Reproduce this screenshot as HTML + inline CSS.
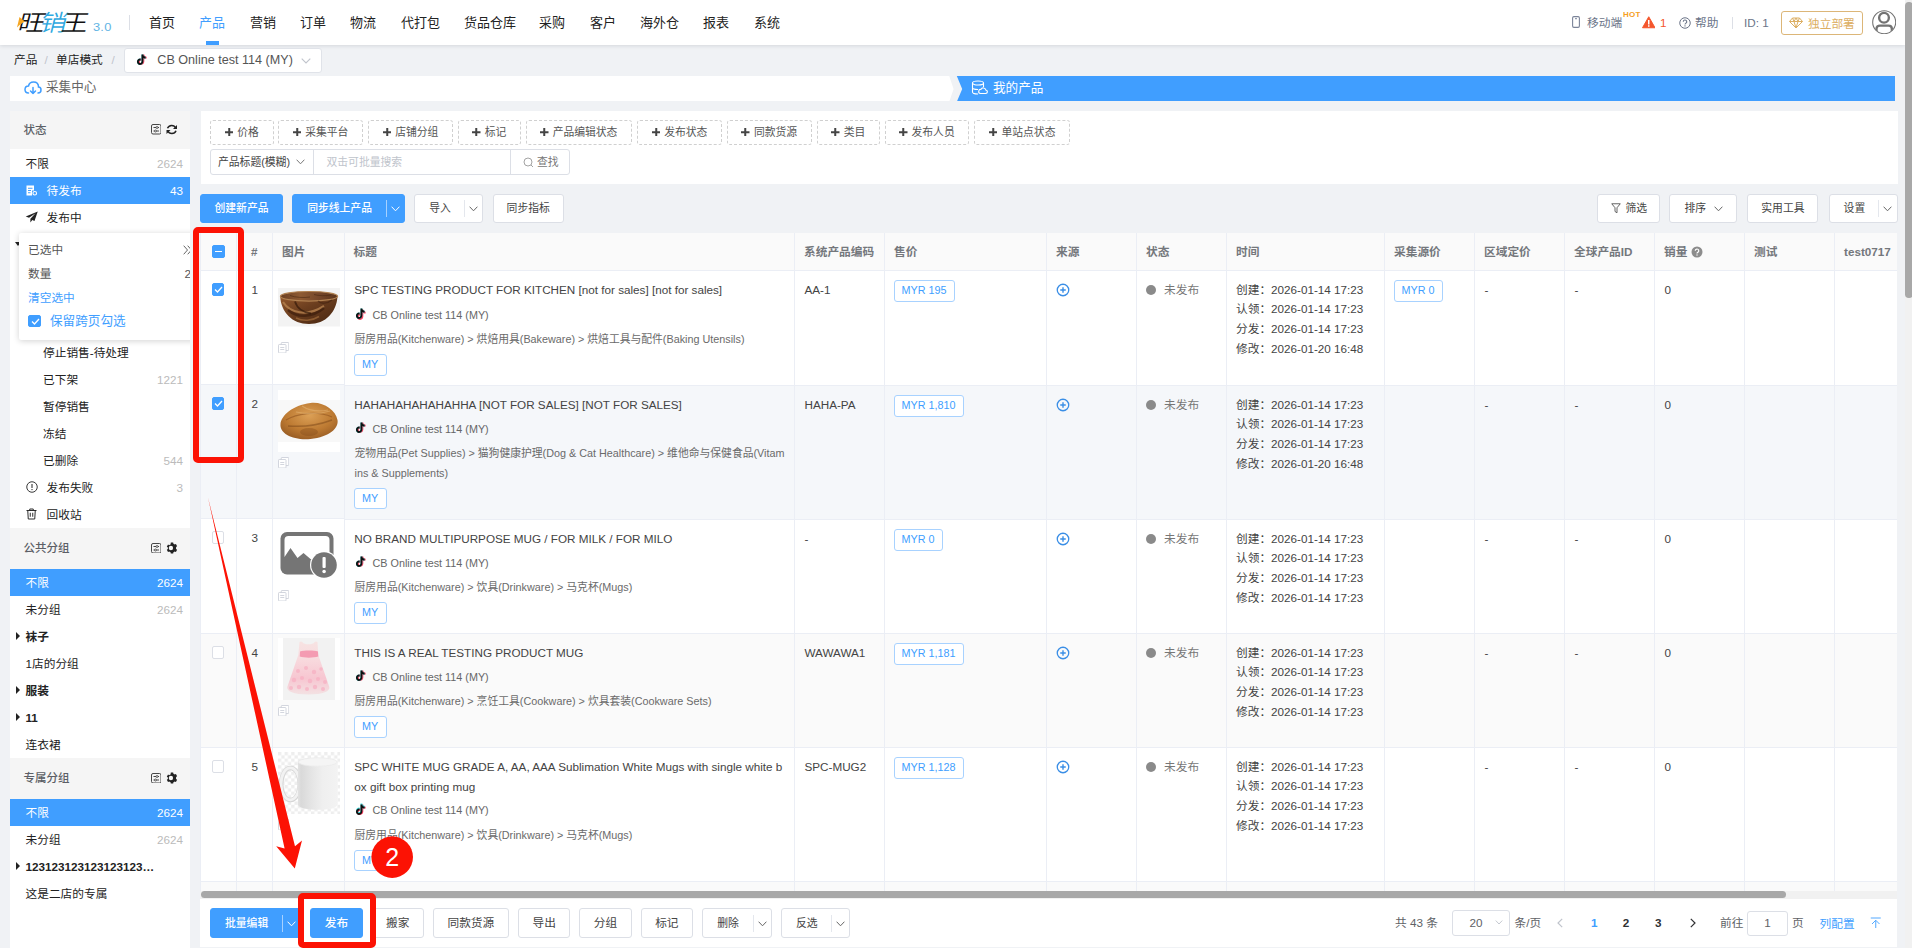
<!DOCTYPE html><html lang="zh-CN"><head><meta charset="utf-8"><title>旺销王 - 产品</title><style>
*{box-sizing:border-box;margin:0;padding:0}
html,body{width:1912px;height:948px;overflow:hidden}
body{background:#f0f2f5;font-family:"Liberation Sans","Noto Sans CJK SC",sans-serif;font-size:10.8px;color:#333;position:relative;line-height:1}
.a{position:absolute}
.t{position:absolute;white-space:nowrap;line-height:1}
#hdr{left:0;top:0;width:1905px;height:45px;background:#fff;box-shadow:0 1px 4px rgba(0,21,41,.12)}
.nav{font-size:13px;color:#222;top:15.5px}
.btn{position:absolute;height:28.5px;border:1px solid #dcdfe6;border-radius:3px;background:#fff;color:#444;font-size:10.8px;text-align:center;line-height:26px;white-space:nowrap}
.btn.p{background:#409eff;border-color:#409eff;color:#fff;font-weight:500}
.tag{position:absolute;top:120px;height:24.5px;border:1px dashed #d0d0d0;border-radius:3px;background:#fff;color:#555;font-size:10.8px;line-height:22px;text-align:center;white-space:nowrap}
.tag svg{display:inline-block;vertical-align:-.2px;margin-right:4px}
.sb{left:10px;width:180px;background:#fff}
.sh{position:absolute;left:10px;width:180px;height:38.5px;background:#f5f5f5;color:#5c5f66;font-weight:500;font-size:11.5px}
.si{position:absolute;left:10px;width:180px;height:27px;font-size:11.7px;color:#222;line-height:27px}
.si.sel{background:#409eff;color:#fff}
.si .n{position:absolute;right:7px;top:0;color:#bbb;font-size:11.7px}
.si.sel .n{color:#fff}
.si .l{position:absolute;top:0}
.th{position:absolute;top:0;height:38px;line-height:38px;font-weight:bold;color:#74777c;font-size:11.7px;white-space:nowrap}
.vl{position:absolute;top:232.5px;width:1px;height:658px;background:#ebeef5}
.row{position:absolute;left:200.5px;width:1696px;border-bottom:1px solid #ebeef5}
.ttl{position:absolute;left:153.3px;width:432px;font-size:11.7px;line-height:19.8px;color:#444;word-break:break-all}
.shop{position:absolute;left:171.5px;font-size:10.8px;color:#666;white-space:nowrap;line-height:12px}
.cat{position:absolute;left:153.5px;width:431px;font-size:10.8px;color:#6a6a6a;line-height:19.8px;word-break:break-all}
.my{position:absolute;left:152.5px;width:33px;height:21.5px;border:1px solid #a8d2ff;border-radius:3px;color:#409eff;font-size:10.8px;line-height:19px;text-align:center;background:#fff}
.price{position:absolute;height:21.5px;border:1px solid #a8d2ff;border-radius:3px;color:#409eff;font-size:10.8px;line-height:19px;text-align:center;background:#fff;white-space:nowrap;padding:0 7px}
.c{position:absolute;font-size:11.7px;color:#444;white-space:nowrap;line-height:14px}
.tm{position:absolute;left:1035px;font-size:11.7px;color:#444;white-space:nowrap;line-height:19.7px}
.cb{position:absolute;width:12.5px;height:12.5px;border:1px solid #dcdfe6;border-radius:2px;background:#fff}
.cb.on{background:#409eff;border-color:#409eff}
.red{position:absolute;border:6.5px solid #fc1204;border-radius:5px}
</style></head><body><div id="hdr" class="a"></div><div class="t" style="left:15.5px;top:12px;font-size:23px;font-weight:350;letter-spacing:-4.2px;color:#111;transform:skewX(-14deg) scaleX(1.15);transform-origin:left bottom">旺<span style="color:#2ea8e0">销</span>王</div>
<svg class="a" style="left:17px;top:17px" width="8" height="10.5" viewBox="0 0 8 10.5"><path d="M2.500 0 L7.800 4.500 L2.500 8 L0 10.500 Z" fill="#f5a623"/></svg>
<div class="t" style="left:92.5px;top:21.8px;font-size:10.5px;color:#62b4e4;letter-spacing:.2px;transform:scaleX(1.22);transform-origin:left">3.0</div>
<div class="a" style="left:129px;top:15px;width:1px;height:15px;background:#dcdfe6"></div><div class="t nav" style="left:149px">首页</div><div class="t nav" style="left:199px;color:#409eff">产品</div><div class="t nav" style="left:250px">营销</div><div class="t nav" style="left:300px">订单</div><div class="t nav" style="left:350px">物流</div><div class="t nav" style="left:401px">代打包</div><div class="t nav" style="left:464px">货品仓库</div><div class="t nav" style="left:539px">采购</div><div class="t nav" style="left:590px">客户</div><div class="t nav" style="left:640px">海外仓</div><div class="t nav" style="left:703px">报表</div><div class="t nav" style="left:754px">系统</div><div class="a" style="left:206px;top:41px;width:13px;height:4px;background:#409eff"></div><svg class="a" style="left:1572px;top:16px" width="8" height="12" viewBox="0 0 8 12"><rect x=".6" y=".6" width="6.8" height="10.8" rx="1.3" fill="none" stroke="#7b8499" stroke-width="1.1"/><rect x="3" y="2.2" width="2" height="1" fill="#7b8499"/></svg>
<div class="t" style="left:1587px;top:16.5px;font-size:11.7px;color:#6b7488">移动端</div>
<div class="t" style="left:1622.500px;top:10.800px;font-size:7.400px;font-weight:bold;color:#f5a023;letter-spacing:.3px;transform:scaleX(1.08);transform-origin:left">HOT</div>
<svg class="a" style="left:1641.5px;top:16px" width="13.5" height="12.5" viewBox="0 0 27 25"><path d="M13.5 1.5 L26 23.5 L1 23.5 Z" fill="#f4562c" stroke="#f4562c" stroke-width="2" stroke-linejoin="round"/><rect x="12" y="8" width="3" height="9" fill="#fff"/><rect x="12" y="18.5" width="3" height="3" fill="#fff"/></svg>
<div class="t" style="left:1660px;top:16.5px;font-size:11.7px;color:#f4562c">1</div>
<svg class="a" style="left:1678.5px;top:16.5px" width="12" height="12" viewBox="0 0 24 24"><circle cx="12" cy="12" r="10.5" fill="none" stroke="#6b7488" stroke-width="2"/><path d="M8.5 9.5a3.5 3.5 0 1 1 5 3.2c-1 .6-1.5 1.1-1.5 2.3" fill="none" stroke="#6b7488" stroke-width="2.2"/><rect x="10.9" y="16.6" width="2.2" height="2.4" fill="#6b7488"/></svg>
<div class="t" style="left:1695px;top:16.5px;font-size:11.7px;color:#6b7488">帮助</div>
<div class="a" style="left:1732px;top:17px;width:1px;height:12px;background:#dcdfe6"></div>
<div class="t" style="left:1744px;top:17px;font-size:11.7px;color:#6b7488">ID: 1</div>
<div class="a" style="left:1781px;top:11px;width:82px;height:24px;border:1px solid #dcb678;border-radius:3px;background:#fff"></div>
<svg class="a" style="left:1789px;top:17px" width="14" height="12" viewBox="0 0 28 24"><path d="M7 2h14l6 7-13 13L1 9z M1 9h26 M10 9l4 13 4-13 M7 2l3 7 4-7 4 7 3-7" fill="none" stroke="#dcae62" stroke-width="2" stroke-linejoin="round"/></svg>
<div class="t" style="left:1808px;top:17.5px;font-size:11.7px;color:#dcae62">独立部署</div>
<svg class="a" style="left:1871.800px;top:9.800px" width="24.400" height="24.400" viewBox="0 0 50 50"><defs><clipPath id="avc"><circle cx="25" cy="25" r="23"/></clipPath></defs><circle cx="25" cy="25" r="23.600" fill="#fff" stroke="#737373" stroke-width="2.200"/><g clip-path="url(#avc)" fill="none" stroke="#737373" stroke-width="4.800"><circle cx="24.600" cy="15.800" r="10"/><path d="M9.200 46v-7.500c0-4 3-6.500 7-6.500h17.500c4 0 7 2.500 7 6.500V46"/></g></svg><div class="t" style="left:14px;top:54px;font-size:11.7px;color:#222">产品</div>
<div class="t" style="left:44.5px;top:54px;font-size:11.7px;color:#c0c4cc">/</div>
<div class="t" style="left:56px;top:54px;font-size:11.7px;color:#222">单店模式</div>
<div class="t" style="left:111.5px;top:54px;font-size:11.7px;color:#c0c4cc">/</div>
<div class="a" style="left:124px;top:47.600px;width:198px;height:25px;border:1px solid #e0e3e9;border-radius:3px;background:#fff"></div>
<svg class="a" style="left:136.5px;top:54.4px" width="10.500" height="11.500" viewBox="0 0 21 23"><path d="M11 1h3.600c.3 2.600 1.800 4.300 4.600 4.600v3.600c-1.700 0-3.200-.5-4.600-1.400v7.400c0 4-2.900 6.600-6.400 6.600-3.600 0-6.300-2.800-6.300-6.300 0-3.900 3.300-6.800 7.300-6.200v3.700c-1.900-.5-3.600.7-3.600 2.500 0 1.500 1.200 2.600 2.600 2.600 1.600 0 2.800-1.100 2.800-3z" fill="#ff3b5c"/></svg><svg class="a" style="left:135.6px;top:53.7px" width="10.500" height="11.500" viewBox="0 0 21 23"><path d="M11 1h3.600c.3 2.600 1.800 4.300 4.600 4.600v3.600c-1.700 0-3.200-.5-4.600-1.400v7.400c0 4-2.900 6.600-6.400 6.600-3.600 0-6.300-2.800-6.300-6.300 0-3.900 3.300-6.800 7.300-6.200v3.700c-1.900-.5-3.600.7-3.600 2.500 0 1.500 1.200 2.600 2.600 2.600 1.600 0 2.800-1.100 2.800-3z" fill="#41e0e0"/></svg><svg class="a" style="left:136px;top:54px" width="10.500" height="11.500" viewBox="0 0 21 23"><path d="M11 1h3.600c.3 2.600 1.800 4.300 4.600 4.600v3.600c-1.700 0-3.200-.5-4.600-1.400v7.400c0 4-2.900 6.600-6.400 6.600-3.600 0-6.300-2.800-6.300-6.300 0-3.900 3.300-6.800 7.300-6.200v3.700c-1.900-.5-3.600.7-3.600 2.500 0 1.500 1.200 2.600 2.600 2.600 1.600 0 2.800-1.100 2.800-3z" fill="#111"/></svg>
<div class="t" style="left:157.3px;top:53.5px;font-size:12.6px;color:#555">CB Online test 114 (MY)</div>
<svg class="a" style="left:300.5px;top:57.5px" width="10" height="6" viewBox="0 0 10 6"><path d="M.7.7 5 5 9.3.7" fill="none" stroke="#c0c4cc" stroke-width="1.1"/></svg><div class="a" style="left:10px;top:75.600px;width:1885px;height:25.800px;background:#fff"></div>
<svg class="a" style="left:944px;top:75.600px" width="20" height="25.800" viewBox="0 0 20 25" preserveAspectRatio="none"><rect width="20" height="25" fill="#f0f2f5"/><path d="M0 0H5.200L9.600 12.500 5.200 25H0Z" fill="#fff"/><path d="M12.800 0H20V25H12.800L18.200 12.500Z" fill="#409eff"/></svg>
<div class="a" style="left:963px;top:75.600px;width:932px;height:25.800px;background:#409eff"></div>
<svg class="a" style="left:24px;top:80.6px" width="18" height="15" viewBox="0 0 36 30"><path d="M9 24c-4 0-7-3-7-7s3-7 7-7c1-5 5-8 10-8 6 0 10 4 10 10 3 0 5 3 5 6 0 4-3 6-6 6" fill="none" stroke="#409eff" stroke-width="3" stroke-linecap="round"/><path d="M18 13v12m-5-5 5 5 5-5" fill="none" stroke="#409eff" stroke-width="3" stroke-linecap="round" stroke-linejoin="round"/></svg>
<div class="t" style="left:46px;top:81px;font-size:12.6px;color:#666">采集中心</div>
<svg class="a" style="left:971px;top:80px" width="17" height="16" viewBox="0 0 34 32"><ellipse cx="14" cy="6" rx="11" ry="4" fill="none" stroke="#fff" stroke-width="2.2"/><path d="M3 6v18c0 2.2 4.9 4 11 4 M25 6v8 M3 15c0 2.2 4.9 4 11 4" fill="none" stroke="#fff" stroke-width="2.2"/><path d="M19 27h10a3.5 3.5 0 0 0 .5-7 5 5 0 0 0-9.500-1.200A4 4 0 0 0 19 27z" fill="none" stroke="#fff" stroke-width="2.2"/></svg>
<div class="t" style="left:993px;top:81.5px;font-size:12.6px;color:#fff">我的产品</div><div class="a" style="left:200.500px;top:110.500px;width:1697px;height:73.500px;background:#fff"></div><div class="tag" style="left:210px;width:63.5px"><svg width="8.500" height="8.500" viewBox="0 0 17 17"><path d="M6.500 0h4v6.500H17v4h-6.500V17h-4v-6.500H0v-4h6.500z" fill="#444"/></svg>价格</div><div class="tag" style="left:278.4px;width:84.2px"><svg width="8.500" height="8.500" viewBox="0 0 17 17"><path d="M6.500 0h4v6.500H17v4h-6.500V17h-4v-6.500H0v-4h6.500z" fill="#444"/></svg>采集平台</div><div class="tag" style="left:368.4px;width:84.2px"><svg width="8.500" height="8.500" viewBox="0 0 17 17"><path d="M6.500 0h4v6.500H17v4h-6.500V17h-4v-6.500H0v-4h6.500z" fill="#444"/></svg>店铺分组</div><div class="tag" style="left:457.5px;width:63.5px"><svg width="8.500" height="8.500" viewBox="0 0 17 17"><path d="M6.500 0h4v6.500H17v4h-6.500V17h-4v-6.500H0v-4h6.500z" fill="#444"/></svg>标记</div><div class="tag" style="left:525.6px;width:106.4px"><svg width="8.500" height="8.500" viewBox="0 0 17 17"><path d="M6.500 0h4v6.500H17v4h-6.500V17h-4v-6.500H0v-4h6.500z" fill="#444"/></svg>产品编辑状态</div><div class="tag" style="left:637px;width:85px"><svg width="8.500" height="8.500" viewBox="0 0 17 17"><path d="M6.500 0h4v6.500H17v4h-6.500V17h-4v-6.500H0v-4h6.500z" fill="#444"/></svg>发布状态</div><div class="tag" style="left:726.5px;width:85.5px"><svg width="8.500" height="8.500" viewBox="0 0 17 17"><path d="M6.500 0h4v6.500H17v4h-6.500V17h-4v-6.500H0v-4h6.500z" fill="#444"/></svg>同款货源</div><div class="tag" style="left:816.5px;width:63.4px"><svg width="8.500" height="8.500" viewBox="0 0 17 17"><path d="M6.500 0h4v6.500H17v4h-6.500V17h-4v-6.500H0v-4h6.500z" fill="#444"/></svg>类目</div><div class="tag" style="left:884.6px;width:84.5px"><svg width="8.500" height="8.500" viewBox="0 0 17 17"><path d="M6.500 0h4v6.500H17v4h-6.500V17h-4v-6.500H0v-4h6.500z" fill="#444"/></svg>发布人员</div><div class="tag" style="left:974.3px;width:95.8px"><svg width="8.500" height="8.500" viewBox="0 0 17 17"><path d="M6.500 0h4v6.500H17v4h-6.500V17h-4v-6.500H0v-4h6.500z" fill="#444"/></svg>单站点状态</div><div class="a" style="left:210px;top:149px;width:360px;height:26px;border:1px solid #dcdfe6;border-radius:3px;background:#fff"></div>
<div class="a" style="left:313px;top:150px;width:1px;height:24px;background:#dcdfe6"></div>
<div class="a" style="left:510px;top:150px;width:1px;height:24px;background:#dcdfe6"></div>
<div class="t" style="left:218px;top:156.5px;font-size:10.8px;color:#444">产品标题(模糊)</div>
<svg class="a" style="left:295.5px;top:159px" width="9" height="6" viewBox="0 0 9 6"><path d="M.6.7 4.500 4.800 8.400.7" fill="none" stroke="#777" stroke-width="1"/></svg>
<div class="t" style="left:326.5px;top:156.500px;font-size:10.8px;color:#c0c4cc">双击可批量搜索</div>
<svg class="a" style="left:523px;top:156.500px" width="11" height="11" viewBox="0 0 22 22"><circle cx="10" cy="10" r="8" fill="none" stroke="#999" stroke-width="1.800"/><path d="M16 16l4 4" stroke="#999" stroke-width="1.800"/></svg>
<div class="t" style="left:537px;top:156.500px;font-size:10.8px;color:#777">查找</div><div class="btn p" style="left:200px;top:194px;width:83px;height:29px;line-height:27px">创建新产品</div><div class="btn p" style="left:292.2px;top:194px;width:113px;height:29px;line-height:27px"><span style="position:absolute;left:14px">同步线上产品</span></div><div class="a" style="left:385.5px;top:200px;width:1px;height:17px;background:#a6d1ff"></div><svg class="a" style="left:390.5px;top:206px" width="9" height="6" viewBox="0 0 9 6"><path d="M.6.7 4.500 4.800 8.400.7" fill="none" stroke="#fff" stroke-width="1"/></svg><div class="btn" style="left:414.3px;top:194px;width:68.5px;height:29px;line-height:27px"><span style="position:absolute;left:14px">导入</span></div><div class="a" style="left:463.5px;top:200px;width:1px;height:17px;background:#e4e7ed"></div><svg class="a" style="left:468.5px;top:206px" width="9" height="6" viewBox="0 0 9 6"><path d="M.6.7 4.500 4.800 8.400.7" fill="none" stroke="#666" stroke-width="1"/></svg><div class="btn" style="left:492.7px;top:194px;width:71px;height:29px;line-height:27px">同步指标</div><div class="btn" style="left:1596.5px;top:194px;width:63px;height:29px;line-height:27px"><span style="position:absolute;left:28px">筛选</span></div><svg class="a" style="left:1611px;top:203px" width="10" height="11" viewBox="0 0 20 22"><path d="M1.500 1.500h17l-6.500 8v10l-4-2.500v-7.500z" fill="none" stroke="#555" stroke-width="1.800" stroke-linejoin="round"/></svg><div class="btn" style="left:1669.4px;top:194px;width:68px;height:29px;line-height:27px"><span style="position:absolute;left:14px">排序</span></div><svg class="a" style="left:1713.5px;top:206px" width="9" height="6" viewBox="0 0 9 6"><path d="M.6.7 4.500 4.800 8.400.7" fill="none" stroke="#666" stroke-width="1"/></svg><div class="btn" style="left:1747.4px;top:194px;width:71px;height:29px;line-height:27px">实用工具</div><div class="btn" style="left:1828.6px;top:194px;width:69px;height:29px;line-height:27px"><span style="position:absolute;left:14px">设置</span></div><div class="a" style="left:1878px;top:200px;width:1px;height:17px;background:#e4e7ed"></div><svg class="a" style="left:1883px;top:206px" width="9" height="6" viewBox="0 0 9 6"><path d="M.6.7 4.500 4.800 8.400.7" fill="none" stroke="#666" stroke-width="1"/></svg><div class="a" style="left:200.5px;top:232.5px;width:1696px;height:658px;background:#fff;overflow:hidden"></div><div class="a" style="left:200.5px;top:232.500px;width:1696px;height:38px;background:#fafafa;border-bottom:1px solid #ebeef5"></div><div class="row" style="top:271px;height:115px;background:#fff"><div class="a" style="left:.5px;top:-.5px"><div class="ttl" style="top:9.250px">SPC TESTING PRODUCT FOR KITCHEN [not for sales] [not for sales]</div><svg class="a" style="left:154.8px;top:38.099999999999994px" width="10.500" height="11.500" viewBox="0 0 21 23"><path d="M11 1h3.600c.3 2.600 1.800 4.300 4.600 4.600v3.600c-1.700 0-3.200-.5-4.600-1.400v7.400c0 4-2.900 6.600-6.400 6.600-3.600 0-6.300-2.800-6.300-6.300 0-3.900 3.300-6.800 7.300-6.200v3.700c-1.900-.5-3.600.7-3.600 2.500 0 1.500 1.200 2.600 2.600 2.600 1.600 0 2.800-1.100 2.800-3z" fill="#ff3b5c"/></svg><svg class="a" style="left:153.9px;top:37.4px" width="10.500" height="11.500" viewBox="0 0 21 23"><path d="M11 1h3.600c.3 2.600 1.800 4.300 4.600 4.600v3.600c-1.700 0-3.200-.5-4.600-1.400v7.400c0 4-2.900 6.600-6.400 6.600-3.600 0-6.300-2.800-6.300-6.300 0-3.900 3.300-6.800 7.300-6.200v3.700c-1.900-.5-3.600.7-3.600 2.500 0 1.500 1.200 2.600 2.600 2.600 1.600 0 2.800-1.100 2.800-3z" fill="#41e0e0"/></svg><svg class="a" style="left:154.3px;top:37.699999999999996px" width="10.500" height="11.500" viewBox="0 0 21 23"><path d="M11 1h3.600c.3 2.600 1.800 4.300 4.600 4.600v3.600c-1.700 0-3.200-.5-4.600-1.400v7.400c0 4-2.900 6.600-6.400 6.600-3.600 0-6.300-2.800-6.300-6.300 0-3.900 3.300-6.800 7.300-6.200v3.700c-1.900-.5-3.600.7-3.600 2.500 0 1.500 1.200 2.600 2.600 2.600 1.600 0 2.800-1.100 2.800-3z" fill="#111"/></svg><div class="shop" style="top:38.4px">CB Online test 114 (MY)</div><div class="cat" style="top:59.2px">厨房用品(Kitchenware) &gt; 烘焙用具(Bakeware) &gt; 烘焙工具与配件(Baking Utensils)</div><div class="my" style="top:83.8px">MY</div><div class="c" style="left:603.500px;top:12.500px">AA-1</div><div class="price" style="left:692.500px;top:9.500px">MYR 195</div><svg class="a" style="left:855px;top:12px" width="14" height="14" viewBox="0 0 28 28"><circle cx="14" cy="14" r="11.500" fill="none" stroke="#3a8ee6" stroke-width="2.600"/><path d="M14 8.500v11M8.500 14h11" stroke="#3a8ee6" stroke-width="2.800"/></svg><div class="a" style="left:945px;top:14px;width:10px;height:10px;border-radius:5px;background:#8a8a8a"></div><div class="c" style="left:963px;top:12.500px;color:#777">未发布</div><div class="tm" style="top:9.200px">创建：2026-01-14 17:23<br>认领：2026-01-14 17:23<br>分发：2026-01-14 17:23<br>修改：2026-01-20 16:48</div><div class="price" style="left:1192.500px;top:9.500px">MYR 0</div><div class="c" style="left:1283.500px;top:12.500px">-</div><div class="c" style="left:1373.500px;top:12.500px">-</div><div class="c" style="left:1463.500px;top:12.500px">0</div></div></div><div class="row" style="top:271px;height:114px;width:144px;background:#fff"><div class="a" style="left:-.5px;top:-.5px"><div class="cb on" style="left:11.800px;top:12.500px"><svg class="a" style="left:1.500px;top:2px" width="9" height="7" viewBox="0 0 18 14"><path d="M2 7l5 5L16 2" fill="none" stroke="#fff" stroke-width="2.600"/></svg></div><div class="c" style="left:51.500px;top:12px">1</div><div class="a" style="left:0;top:0px"><svg class="a" style="left:77.5px;top:17.5px" width="62" height="38.500" viewBox="0 0 62 38.500"><defs><linearGradient id="bw" x1="0" y1="0" x2="1" y2="1"><stop offset="0" stop-color="#94592e"/><stop offset=".45" stop-color="#6a3d1e"/><stop offset="1" stop-color="#472611"/></linearGradient><linearGradient id="bi" x1="0" y1="0" x2="1" y2="0"><stop offset="0" stop-color="#6b3f22"/><stop offset=".35" stop-color="#8d5a33"/><stop offset=".7" stop-color="#74462a"/><stop offset="1" stop-color="#5a331b"/></linearGradient></defs><rect width="62" height="38.500" fill="#f3f3f3"/><path d="M2.200 8.500C3 24 14 36 31 36s27.500-12 28.500-27.500C52 13.500 10 13.500 2.200 8.500z" fill="url(#bw)"/><ellipse cx="31" cy="8.300" rx="28.600" ry="4.800" fill="url(#bi)" stroke="#b08050" stroke-width="1.200"/><path d="M5 14c7 11 24 15 41 4" stroke="#b98552" stroke-width="2.200" fill="none" opacity=".75"/><path d="M10 22c9 8 24 8 36-2" stroke="#35190a" stroke-width="2.400" fill="none" opacity=".6"/><path d="M17 13.500c2 7 9 11 16 12" stroke="#2e1508" stroke-width="1.800" fill="none" opacity=".65"/><path d="M18 30c7 3.500 16 3 23-1.500" stroke="#a8713f" stroke-width="1.600" fill="none" opacity=".65"/><path d="M40 13c3 3 9 3 14-1" stroke="#3a1c0c" stroke-width="1.500" fill="none" opacity=".5"/><path d="M12 7.500c5 2 14 2.500 20 1.500M36 6.500c5 1.500 12 1.500 17 .5" stroke="#4a2812" stroke-width="1" fill="none" opacity=".6"/></svg></div><svg class="a" style="left:77.5px;top:71.4px" width="11.500" height="11.500" viewBox="0 0 23 23"><rect x="6.500" y="1" width="15" height="16" rx="1.500" fill="#fff" stroke="#c8ccd6" stroke-width="1.600"/><rect x="1" y="5" width="15" height="17" rx="1.500" fill="#fff" stroke="#c8ccd6" stroke-width="1.600"/><path d="M4.500 11h8M4.500 15h8" stroke="#c8ccd6" stroke-width="1.600"/></svg></div></div><div class="row" style="top:386px;height:134px;background:#f5f7fa"><div class="a" style="left:.5px;top:-.5px"><div class="ttl" style="top:9.250px">HAHAHAHAHAHAHHA [NOT FOR SALES] [NOT FOR SALES]</div><svg class="a" style="left:154.8px;top:36.8px" width="10.500" height="11.500" viewBox="0 0 21 23"><path d="M11 1h3.600c.3 2.600 1.800 4.300 4.600 4.600v3.600c-1.700 0-3.200-.5-4.600-1.400v7.400c0 4-2.900 6.600-6.400 6.600-3.600 0-6.300-2.800-6.300-6.300 0-3.900 3.300-6.800 7.300-6.200v3.700c-1.900-.5-3.600.7-3.600 2.500 0 1.500 1.200 2.600 2.600 2.600 1.600 0 2.800-1.100 2.800-3z" fill="#ff3b5c"/></svg><svg class="a" style="left:153.9px;top:36.1px" width="10.500" height="11.500" viewBox="0 0 21 23"><path d="M11 1h3.600c.3 2.600 1.800 4.300 4.600 4.600v3.600c-1.700 0-3.200-.5-4.600-1.400v7.400c0 4-2.900 6.600-6.400 6.600-3.600 0-6.300-2.800-6.300-6.300 0-3.900 3.300-6.800 7.300-6.200v3.700c-1.900-.5-3.600.7-3.600 2.500 0 1.500 1.200 2.600 2.600 2.600 1.600 0 2.800-1.100 2.800-3z" fill="#41e0e0"/></svg><svg class="a" style="left:154.3px;top:36.4px" width="10.500" height="11.500" viewBox="0 0 21 23"><path d="M11 1h3.600c.3 2.600 1.800 4.300 4.600 4.600v3.600c-1.700 0-3.200-.5-4.600-1.400v7.400c0 4-2.900 6.600-6.400 6.600-3.600 0-6.300-2.800-6.300-6.300 0-3.900 3.300-6.800 7.300-6.200v3.700c-1.900-.5-3.600.7-3.600 2.500 0 1.500 1.200 2.600 2.600 2.600 1.600 0 2.800-1.100 2.800-3z" fill="#111"/></svg><div class="shop" style="top:37.1px">CB Online test 114 (MY)</div><div class="cat" style="top:58.6px">宠物用品(Pet Supplies) &gt; 猫狗健康护理(Dog &amp; Cat Healthcare) &gt; 维他命与保健食品(Vitamins &amp; Supplements)</div><div class="my" style="top:102.3px">MY</div><div class="c" style="left:603.500px;top:12.500px">HAHA-PA</div><div class="price" style="left:692.500px;top:9.500px">MYR 1,810</div><svg class="a" style="left:855px;top:12px" width="14" height="14" viewBox="0 0 28 28"><circle cx="14" cy="14" r="11.500" fill="none" stroke="#3a8ee6" stroke-width="2.600"/><path d="M14 8.500v11M8.500 14h11" stroke="#3a8ee6" stroke-width="2.800"/></svg><div class="a" style="left:945px;top:14px;width:10px;height:10px;border-radius:5px;background:#8a8a8a"></div><div class="c" style="left:963px;top:12.500px;color:#777">未发布</div><div class="tm" style="top:9.200px">创建：2026-01-14 17:23<br>认领：2026-01-14 17:23<br>分发：2026-01-14 17:23<br>修改：2026-01-20 16:48</div><div class="c" style="left:1283.500px;top:12.500px">-</div><div class="c" style="left:1373.500px;top:12.500px">-</div><div class="c" style="left:1463.500px;top:12.500px">0</div></div></div><div class="row" style="top:385px;height:134px;width:144px;background:#f5f7fa"><div class="a" style="left:-.5px;top:-.5px"><div class="cb on" style="left:11.800px;top:12.500px"><svg class="a" style="left:1.500px;top:2px" width="9" height="7" viewBox="0 0 18 14"><path d="M2 7l5 5L16 2" fill="none" stroke="#fff" stroke-width="2.600"/></svg></div><div class="c" style="left:51.500px;top:12px">2</div><div class="a" style="left:0;top:0px"><svg class="a" style="left:77.5px;top:5px" width="62" height="62" viewBox="0 0 62 62"><defs><radialGradient id="pl" cx=".5" cy=".35" r=".75"><stop offset="0" stop-color="#dca056"/><stop offset=".55" stop-color="#bd7a32"/><stop offset="1" stop-color="#8e5420"/></radialGradient></defs><rect width="62" height="62" fill="#fff"/><rect y="10" width="62" height="42" fill="#f8f8f8"/><path d="M2.500 34c.5-8 12-19 30-21 13-1.500 25 7 27 17 1.500 8-8 17-27 19-17 1.500-31-5-30-15z" fill="url(#pl)"/><path d="M8 30c10-6 30-10 46-3" stroke="#8a4f1c" stroke-width="1.200" fill="none" opacity=".55"/><path d="M10 36c12 1 28 0 44-6" stroke="#7a4518" stroke-width="1.500" fill="none" opacity=".5"/><path d="M24 16c6 4 16 6 26 4M18 22c10 2 24 2 34-1" stroke="#e2b070" stroke-width="1.200" fill="none" opacity=".6"/><ellipse cx="31" cy="42" rx="9" ry="4" fill="#7a4518" opacity=".35"/></svg></div><svg class="a" style="left:77.5px;top:72.4px" width="11.500" height="11.500" viewBox="0 0 23 23"><rect x="6.500" y="1" width="15" height="16" rx="1.500" fill="#fff" stroke="#c8ccd6" stroke-width="1.600"/><rect x="1" y="5" width="15" height="17" rx="1.500" fill="#fff" stroke="#c8ccd6" stroke-width="1.600"/><path d="M4.500 11h8M4.500 15h8" stroke="#c8ccd6" stroke-width="1.600"/></svg></div></div><div class="row" style="top:520px;height:114px;background:#fff"><div class="a" style="left:.5px;top:-.5px"><div class="ttl" style="top:9.250px">NO BRAND MULTIPURPOSE MUG / FOR MILK / FOR MILO</div><svg class="a" style="left:154.8px;top:36.8px" width="10.500" height="11.500" viewBox="0 0 21 23"><path d="M11 1h3.600c.3 2.600 1.800 4.300 4.600 4.600v3.600c-1.700 0-3.200-.5-4.600-1.400v7.400c0 4-2.900 6.600-6.400 6.600-3.600 0-6.300-2.800-6.300-6.300 0-3.900 3.300-6.800 7.300-6.200v3.700c-1.900-.5-3.600.7-3.600 2.500 0 1.500 1.200 2.600 2.600 2.600 1.600 0 2.800-1.100 2.800-3z" fill="#ff3b5c"/></svg><svg class="a" style="left:153.9px;top:36.1px" width="10.500" height="11.500" viewBox="0 0 21 23"><path d="M11 1h3.600c.3 2.600 1.800 4.300 4.600 4.600v3.600c-1.700 0-3.200-.5-4.600-1.400v7.400c0 4-2.900 6.600-6.400 6.600-3.600 0-6.300-2.800-6.300-6.300 0-3.900 3.300-6.800 7.300-6.200v3.700c-1.900-.5-3.600.7-3.600 2.500 0 1.500 1.200 2.600 2.600 2.600 1.600 0 2.800-1.100 2.800-3z" fill="#41e0e0"/></svg><svg class="a" style="left:154.3px;top:36.4px" width="10.500" height="11.500" viewBox="0 0 21 23"><path d="M11 1h3.600c.3 2.600 1.800 4.300 4.600 4.600v3.600c-1.700 0-3.200-.5-4.600-1.400v7.400c0 4-2.900 6.600-6.400 6.600-3.600 0-6.300-2.800-6.300-6.300 0-3.900 3.300-6.800 7.300-6.200v3.700c-1.900-.5-3.600.7-3.600 2.500 0 1.500 1.200 2.600 2.600 2.600 1.600 0 2.800-1.100 2.800-3z" fill="#111"/></svg><div class="shop" style="top:37.1px">CB Online test 114 (MY)</div><div class="cat" style="top:58.6px">厨房用品(Kitchenware) &gt; 饮具(Drinkware) &gt; 马克杯(Mugs)</div><div class="my" style="top:82.5px">MY</div><div class="c" style="left:603.500px;top:12.500px">-</div><div class="price" style="left:692.500px;top:9.500px">MYR 0</div><svg class="a" style="left:855px;top:12px" width="14" height="14" viewBox="0 0 28 28"><circle cx="14" cy="14" r="11.500" fill="none" stroke="#3a8ee6" stroke-width="2.600"/><path d="M14 8.500v11M8.500 14h11" stroke="#3a8ee6" stroke-width="2.800"/></svg><div class="a" style="left:945px;top:14px;width:10px;height:10px;border-radius:5px;background:#8a8a8a"></div><div class="c" style="left:963px;top:12.500px;color:#777">未发布</div><div class="tm" style="top:9.200px">创建：2026-01-14 17:23<br>认领：2026-01-14 17:23<br>分发：2026-01-14 17:23<br>修改：2026-01-14 17:23</div><div class="c" style="left:1283.500px;top:12.500px">-</div><div class="c" style="left:1373.500px;top:12.500px">-</div><div class="c" style="left:1463.500px;top:12.500px">0</div></div></div><div class="row" style="top:519px;height:115px;width:144px;background:#fff"><div class="a" style="left:-.5px;top:-.5px"><div class="cb" style="left:11.800px;top:12.500px"></div><div class="c" style="left:51.500px;top:12px">3</div><div class="a" style="left:0;top:0px"><svg class="a" style="left:79px;top:12px" width="60" height="54" viewBox="0 0 60 54"><rect x="1.500" y="1" width="53" height="42.500" rx="6.500" fill="#757575"/><path d="M5.500 9a4 4 0 0 1 4-4h37a4 4 0 0 1 4 4v19l-19 0-7-6-6 5-7-10-6 9z" fill="#fff"/><circle cx="45" cy="34" r="14" fill="#fff"/><circle cx="45" cy="34" r="12.800" fill="#757575"/><rect x="43.500" y="26" width="3.200" height="11" rx="1" fill="#fff"/><circle cx="45.100" cy="40.500" r="1.800" fill="#fff"/></svg></div><svg class="a" style="left:77.5px;top:71.4px" width="11.500" height="11.500" viewBox="0 0 23 23"><rect x="6.500" y="1" width="15" height="16" rx="1.500" fill="#fff" stroke="#c8ccd6" stroke-width="1.600"/><rect x="1" y="5" width="15" height="17" rx="1.500" fill="#fff" stroke="#c8ccd6" stroke-width="1.600"/><path d="M4.500 11h8M4.500 15h8" stroke="#c8ccd6" stroke-width="1.600"/></svg></div></div><div class="row" style="top:634px;height:114px;background:#fafafa"><div class="a" style="left:.5px;top:-.5px"><div class="ttl" style="top:9.250px">THIS IS A REAL TESTING PRODUCT MUG</div><svg class="a" style="left:154.8px;top:36.8px" width="10.500" height="11.500" viewBox="0 0 21 23"><path d="M11 1h3.600c.3 2.600 1.800 4.300 4.600 4.600v3.600c-1.700 0-3.200-.5-4.600-1.400v7.400c0 4-2.900 6.600-6.400 6.600-3.600 0-6.300-2.800-6.300-6.300 0-3.900 3.300-6.800 7.300-6.200v3.700c-1.900-.5-3.600.7-3.600 2.500 0 1.500 1.200 2.600 2.600 2.600 1.600 0 2.800-1.100 2.800-3z" fill="#ff3b5c"/></svg><svg class="a" style="left:153.9px;top:36.1px" width="10.500" height="11.500" viewBox="0 0 21 23"><path d="M11 1h3.600c.3 2.600 1.800 4.300 4.600 4.600v3.600c-1.700 0-3.200-.5-4.600-1.400v7.400c0 4-2.900 6.600-6.400 6.600-3.600 0-6.300-2.800-6.300-6.300 0-3.900 3.300-6.800 7.300-6.200v3.700c-1.900-.5-3.600.7-3.600 2.500 0 1.500 1.200 2.600 2.600 2.600 1.600 0 2.800-1.100 2.800-3z" fill="#41e0e0"/></svg><svg class="a" style="left:154.3px;top:36.4px" width="10.500" height="11.500" viewBox="0 0 21 23"><path d="M11 1h3.600c.3 2.600 1.800 4.300 4.600 4.600v3.600c-1.700 0-3.200-.5-4.600-1.400v7.400c0 4-2.900 6.600-6.400 6.600-3.600 0-6.300-2.800-6.300-6.300 0-3.900 3.300-6.800 7.300-6.200v3.700c-1.900-.5-3.600.7-3.600 2.500 0 1.500 1.200 2.600 2.600 2.600 1.600 0 2.800-1.100 2.800-3z" fill="#111"/></svg><div class="shop" style="top:37.1px">CB Online test 114 (MY)</div><div class="cat" style="top:58.6px">厨房用品(Kitchenware) &gt; 烹饪工具(Cookware) &gt; 炊具套装(Cookware Sets)</div><div class="my" style="top:82.5px">MY</div><div class="c" style="left:603.500px;top:12.500px">WAWAWA1</div><div class="price" style="left:692.500px;top:9.500px">MYR 1,181</div><svg class="a" style="left:855px;top:12px" width="14" height="14" viewBox="0 0 28 28"><circle cx="14" cy="14" r="11.500" fill="none" stroke="#3a8ee6" stroke-width="2.600"/><path d="M14 8.500v11M8.500 14h11" stroke="#3a8ee6" stroke-width="2.800"/></svg><div class="a" style="left:945px;top:14px;width:10px;height:10px;border-radius:5px;background:#8a8a8a"></div><div class="c" style="left:963px;top:12.500px;color:#777">未发布</div><div class="tm" style="top:9.200px">创建：2026-01-14 17:23<br>认领：2026-01-14 17:23<br>分发：2026-01-14 17:23<br>修改：2026-01-14 17:23</div><div class="c" style="left:1283.500px;top:12.500px">-</div><div class="c" style="left:1373.500px;top:12.500px">-</div><div class="c" style="left:1463.500px;top:12.500px">0</div></div></div><div class="row" style="top:634px;height:114px;width:144px;background:#fafafa"><div class="a" style="left:-.5px;top:-.5px"><div class="cb" style="left:11.800px;top:12.500px"></div><div class="c" style="left:51.500px;top:12px">4</div><div class="a" style="left:0;top:-0.9px"><svg class="a" style="left:77.5px;top:5px" width="62" height="62" viewBox="0 0 62 62"><defs><linearGradient id="dr" x1="0" y1="0" x2="0" y2="1"><stop offset="0" stop-color="#f7e3e2"/><stop offset=".3" stop-color="#f8dcdf"/><stop offset=".7" stop-color="#f7c6d1"/><stop offset="1" stop-color="#f3e2e3"/></linearGradient></defs><rect width="62" height="62" fill="#fff"/><rect x="5" width="52" height="62" fill="#f2f2f2"/><path d="M21.500 4c1.200-.8 2-.8 3 .2 1.500 2.800 10.500 2.800 12 0 1-1 1.800-1 3-.2l.8 13 11 32c1 4-6 7.500-21 7.500s-22-3.500-21-7.500l11-32z" fill="url(#dr)"/><path d="M22 13.500c4-1.200 14-1.200 18 0l.3 5c-5 1.500-14 1.500-18.600 0z" fill="#f49bb2"/><g fill="#f7afc2" opacity=".7"><circle cx="20" cy="33" r="2"/><circle cx="28" cy="30" r="2"/><circle cx="36" cy="34" r="2.200"/><circle cx="43" cy="31" r="1.800"/><circle cx="16" cy="42" r="2.200"/><circle cx="24" cy="40" r="2"/><circle cx="32" cy="43" r="2.300"/><circle cx="40" cy="41" r="2"/><circle cx="47" cy="44" r="2"/><circle cx="13" cy="50" r="2"/><circle cx="21" cy="49" r="2.200"/><circle cx="29" cy="51" r="2"/><circle cx="37" cy="49" r="2.200"/><circle cx="45" cy="51" r="2"/></g></svg></div><svg class="a" style="left:77.5px;top:71.4px" width="11.500" height="11.500" viewBox="0 0 23 23"><rect x="6.500" y="1" width="15" height="16" rx="1.500" fill="#fff" stroke="#c8ccd6" stroke-width="1.600"/><rect x="1" y="5" width="15" height="17" rx="1.500" fill="#fff" stroke="#c8ccd6" stroke-width="1.600"/><path d="M4.500 11h8M4.500 15h8" stroke="#c8ccd6" stroke-width="1.600"/></svg></div></div><div class="row" style="top:748px;height:134px;background:#fff"><div class="a" style="left:.5px;top:-.5px"><div class="ttl" style="top:9.250px">SPC WHITE MUG GRADE A, AA, AAA Sublimation White Mugs with single white box gift box printing mug</div><svg class="a" style="left:154.8px;top:56.599999999999994px" width="10.500" height="11.500" viewBox="0 0 21 23"><path d="M11 1h3.600c.3 2.600 1.800 4.300 4.600 4.600v3.600c-1.700 0-3.200-.5-4.600-1.400v7.400c0 4-2.900 6.600-6.400 6.600-3.600 0-6.300-2.800-6.300-6.300 0-3.900 3.300-6.800 7.300-6.200v3.700c-1.900-.5-3.600.7-3.600 2.500 0 1.500 1.200 2.600 2.600 2.600 1.600 0 2.800-1.100 2.800-3z" fill="#ff3b5c"/></svg><svg class="a" style="left:153.9px;top:55.9px" width="10.500" height="11.500" viewBox="0 0 21 23"><path d="M11 1h3.600c.3 2.600 1.800 4.300 4.600 4.600v3.600c-1.700 0-3.200-.5-4.600-1.400v7.400c0 4-2.900 6.600-6.400 6.600-3.600 0-6.300-2.800-6.300-6.300 0-3.900 3.300-6.800 7.300-6.200v3.700c-1.900-.5-3.600.7-3.600 2.500 0 1.500 1.200 2.600 2.600 2.600 1.600 0 2.800-1.100 2.800-3z" fill="#41e0e0"/></svg><svg class="a" style="left:154.3px;top:56.199999999999996px" width="10.500" height="11.500" viewBox="0 0 21 23"><path d="M11 1h3.600c.3 2.600 1.800 4.300 4.600 4.600v3.600c-1.700 0-3.200-.5-4.600-1.400v7.400c0 4-2.900 6.600-6.400 6.600-3.600 0-6.300-2.800-6.300-6.300 0-3.900 3.300-6.800 7.300-6.200v3.700c-1.900-.5-3.600.7-3.600 2.500 0 1.500 1.200 2.600 2.600 2.600 1.600 0 2.800-1.100 2.800-3z" fill="#111"/></svg><div class="shop" style="top:56.9px">CB Online test 114 (MY)</div><div class="cat" style="top:78.39999999999999px">厨房用品(Kitchenware) &gt; 饮具(Drinkware) &gt; 马克杯(Mugs)</div><div class="my" style="top:102.3px">MY</div><div class="c" style="left:603.500px;top:12.500px">SPC-MUG2</div><div class="price" style="left:692.500px;top:9.500px">MYR 1,128</div><svg class="a" style="left:855px;top:12px" width="14" height="14" viewBox="0 0 28 28"><circle cx="14" cy="14" r="11.500" fill="none" stroke="#3a8ee6" stroke-width="2.600"/><path d="M14 8.500v11M8.500 14h11" stroke="#3a8ee6" stroke-width="2.800"/></svg><div class="a" style="left:945px;top:14px;width:10px;height:10px;border-radius:5px;background:#8a8a8a"></div><div class="c" style="left:963px;top:12.500px;color:#777">未发布</div><div class="tm" style="top:9.200px">创建：2026-01-14 17:23<br>认领：2026-01-14 17:23<br>分发：2026-01-14 17:23<br>修改：2026-01-14 17:23</div><div class="c" style="left:1283.500px;top:12.500px">-</div><div class="c" style="left:1373.500px;top:12.500px">-</div><div class="c" style="left:1463.500px;top:12.500px">0</div></div></div><div class="row" style="top:748px;height:134px;width:144px;background:#fff"><div class="a" style="left:-.5px;top:-.5px"><div class="cb" style="left:11.800px;top:12.500px"></div><div class="c" style="left:51.500px;top:12px">5</div><div class="a" style="left:0;top:-0.9px"><svg class="a" style="left:77.5px;top:5px" width="62" height="62" viewBox="0 0 62 62"><defs><pattern id="ck" width="6.600" height="6.600" patternUnits="userSpaceOnUse"><rect width="6.600" height="6.600" fill="#fff"/><rect width="3.300" height="3.300" fill="#eee"/><rect x="3.300" y="3.300" width="3.300" height="3.300" fill="#eee"/></pattern><linearGradient id="mg" x1="0" y1="0" x2="1" y2="0"><stop offset="0" stop-color="#e2e2e2"/><stop offset=".08" stop-color="#d9d9d9"/><stop offset=".35" stop-color="#e5e5e5"/><stop offset=".62" stop-color="#efefef"/><stop offset="1" stop-color="#f3f3f3"/></linearGradient></defs><rect width="62" height="62" fill="url(#ck)"/><ellipse cx="12.500" cy="32" rx="9.300" ry="16" fill="none" stroke="#d6d6d6" stroke-width="4.400"/><ellipse cx="12.300" cy="31.800" rx="9.300" ry="16" fill="none" stroke="#f2f2f2" stroke-width="2.800"/><path d="M20 10c0-5.500 39.500-5.500 39.500 0v42.500c0 7-39.500 7-39.500 0z" fill="url(#mg)"/><ellipse cx="39.800" cy="10" rx="19.500" ry="4.200" fill="#f5f5f5" stroke="#ebebeb" stroke-width=".8"/></svg></div><svg class="a" style="left:77.5px;top:71.4px" width="11.500" height="11.500" viewBox="0 0 23 23"><rect x="6.500" y="1" width="15" height="16" rx="1.500" fill="#fff" stroke="#c8ccd6" stroke-width="1.600"/><rect x="1" y="5" width="15" height="17" rx="1.500" fill="#fff" stroke="#c8ccd6" stroke-width="1.600"/><path d="M4.500 11h8M4.500 15h8" stroke="#c8ccd6" stroke-width="1.600"/></svg></div></div><div class="row" style="top:882px;height:9px;background:#fafafa;border:none"></div><div class="a" style="left:0;top:232.500px;width:1912px;height:38px"><div class="th" style="left:251px">#</div><div class="th" style="left:282px">图片</div><div class="th" style="left:353.5px">标题</div><div class="th" style="left:804px">系统产品编码</div><div class="th" style="left:894px">售价</div><div class="th" style="left:1056px">来源</div><div class="th" style="left:1146px">状态</div><div class="th" style="left:1236px">时间</div><div class="th" style="left:1394px">采集源价</div><div class="th" style="left:1484px">区域定价</div><div class="th" style="left:1574px">全球产品ID</div><div class="th" style="left:1664px">销量</div><div class="th" style="left:1754px">测试</div><div class="th" style="left:1844px">test0717</div><svg class="a" style="left:1690.500px;top:13px" width="12" height="12" viewBox="0 0 24 24"><circle cx="12" cy="12" r="11" fill="#8c8c8c"/><path d="M8.500 9.500a3.500 3.500 0 1 1 5 3.200c-1 .6-1.500 1.100-1.500 2.300" fill="none" stroke="#fff" stroke-width="2.400"/><rect x="10.800" y="16.800" width="2.400" height="2.400" fill="#fff"/></svg><div class="cb on" style="left:212.100px;top:12.800px"><div class="a" style="left:2px;top:4.300px;width:6.600px;height:1.800px;background:#fff"></div></div></div><div class="vl" style="left:236px"></div><div class="vl" style="left:272px"></div><div class="vl" style="left:344px"></div><div class="vl" style="left:794px"></div><div class="vl" style="left:884px"></div><div class="vl" style="left:1046px"></div><div class="vl" style="left:1136px"></div><div class="vl" style="left:1226px"></div><div class="vl" style="left:1384px"></div><div class="vl" style="left:1474px"></div><div class="vl" style="left:1564px"></div><div class="vl" style="left:1654px"></div><div class="vl" style="left:1744px"></div><div class="vl" style="left:1834px"></div><div class="vl" style="left:200px"></div><div class="a" style="left:200px;top:891px;width:1696.500px;height:8px;background:#f1f1f1"></div><div class="a" style="left:201px;top:891px;width:1585px;height:7px;border-radius:3.500px;background:#a8a8a8"></div><div class="a" style="left:200px;top:898.500px;width:1696.500px;height:48.200px;background:#fff"></div><div class="btn p" style="left:210px;top:908px;width:90.5px;height:30px;line-height:28px;font-size:10.8px"><span style="position:absolute;left:14px">批量编辑</span></div><div class="a" style="left:281.500px;top:914.500px;width:1px;height:17px;background:#a6d1ff"></div><svg class="a" style="left:286.5px;top:920.5px" width="9" height="6" viewBox="0 0 9 6"><path d="M.6.7 4.500 4.800 8.400.7" fill="none" stroke="#fff" stroke-width="1"/></svg><div class="btn p" style="left:310px;top:908px;width:53px;height:30px;line-height:28px;font-size:11.7px">发布</div><div class="btn" style="left:372px;top:908px;width:51.5px;height:30px;line-height:28px;font-size:11.7px">搬家</div><div class="btn" style="left:433.1px;top:908px;width:75.5px;height:30px;line-height:28px;font-size:11.7px">同款货源</div><div class="btn" style="left:518.4px;top:908px;width:51.5px;height:30px;line-height:28px;font-size:11.7px">导出</div><div class="btn" style="left:579.2px;top:908px;width:52.5px;height:30px;line-height:28px;font-size:11.7px">分组</div><div class="btn" style="left:641.1px;top:908px;width:51.5px;height:30px;line-height:28px;font-size:11.7px">标记</div><div class="btn" style="left:702.3px;top:908px;width:69.5px;height:30px;line-height:28px;font-size:10.8px"><span style="position:absolute;left:14px">删除</span></div><div class="a" style="left:752.500px;top:914.500px;width:1px;height:17px;background:#e4e7ed"></div><svg class="a" style="left:757.5px;top:920.5px" width="9" height="6" viewBox="0 0 9 6"><path d="M.6.7 4.500 4.800 8.400.7" fill="none" stroke="#666" stroke-width="1"/></svg><div class="btn" style="left:781px;top:908px;width:69px;height:30px;line-height:28px;font-size:10.8px"><span style="position:absolute;left:14px">反选</span></div><div class="a" style="left:830.500px;top:914.500px;width:1px;height:17px;background:#e4e7ed"></div><svg class="a" style="left:835.5px;top:920.5px" width="9" height="6" viewBox="0 0 9 6"><path d="M.6.7 4.500 4.800 8.400.7" fill="none" stroke="#666" stroke-width="1"/></svg><div class="t" style="left:1395px;top:917px;font-size:11.700px;color:#606266">共 43 条</div>
<div class="a" style="left:1452.300px;top:910px;width:58px;height:25.500px;border:1px solid #dcdfe6;border-radius:3px;background:#fff"></div>
<div class="t" style="left:1469.500px;top:917px;font-size:11.700px;color:#606266">20</div>
<svg class="a" style="left:1495px;top:920px" width="8" height="5" viewBox="0 0 9 6"><path d="M.6.7 4.500 4.800 8.400.7" fill="none" stroke="#c0c4cc" stroke-width="1.100"/></svg>
<div class="t" style="left:1514.500px;top:917px;font-size:11.700px;color:#606266">条/页</div>
<svg class="a" style="left:1556.500px;top:917.500px" width="6" height="10" viewBox="0 0 6 10"><path d="M5.200.8 1 5l4.200 4.200" fill="none" stroke="#c0c4cc" stroke-width="1.200"/></svg>
<div class="t" style="left:1591px;top:917px;font-size:11.700px;font-weight:bold;color:#409eff">1</div>
<div class="t" style="left:1622.800px;top:917px;font-size:11.700px;font-weight:bold;color:#303133">2</div>
<div class="t" style="left:1655px;top:917px;font-size:11.700px;font-weight:bold;color:#303133">3</div>
<svg class="a" style="left:1689.500px;top:917.500px" width="6" height="10" viewBox="0 0 6 10"><path d="M.8.800 5 5 .8 9.200" fill="none" stroke="#303133" stroke-width="1.200"/></svg>
<div class="t" style="left:1720px;top:917px;font-size:11.700px;color:#606266">前往</div>
<div class="a" style="left:1747.300px;top:911px;width:40.500px;height:24.500px;border:1px solid #dcdfe6;border-radius:3px;background:#fff"></div>
<div class="t" style="left:1764.300px;top:917px;font-size:11.700px;color:#606266">1</div>
<div class="t" style="left:1792px;top:917px;font-size:11.700px;color:#606266">页</div>
<div class="t" style="left:1819.500px;top:917.500px;font-size:11.700px;color:#409eff">列配置</div>
<svg class="a" style="left:1869.500px;top:917px" width="11.500" height="11.500" viewBox="0 0 23 23"><path d="M1.500 2h20M11.500 22V7M4 14l7.500-7.500L19 14" fill="none" stroke="#409eff" stroke-width="1.800"/></svg><div class="a sb" style="top:110.500px;height:838px"></div><div class="sh" style="top:110.5px;height:38.5px"><div class="t" style="left:13.500px;top:14.1px">状态</div></div><svg class="a" style="left:150.5px;top:124.0px" width="10.500" height="10.500" viewBox="0 0 21 21"><rect x="1" y="1" width="19" height="19" rx="3" fill="none" stroke="#333" stroke-width="1.800"/><path d="M5 7h5m4 0h2M5 14h2m4 0h5" stroke="#333" stroke-width="1.800"/><circle cx="12" cy="7" r="2" fill="none" stroke="#333" stroke-width="1.500"/><circle cx="9" cy="14" r="2" fill="none" stroke="#333" stroke-width="1.500"/></svg><svg class="a" style="left:165.5px;top:123.5px" width="11.500" height="11" viewBox="0 0 23 22"><path d="M19.500 8A9 9 0 0 0 3 8.500M3.500 14A9 9 0 0 0 20 13.500" fill="none" stroke="#222" stroke-width="3"/><path d="M22 2v8h-8zM1 20v-8h8z" fill="#222"/></svg><div class="si" style="top:149.5px"><span class="l" style="left:15.5px">不限</span><span class="n">2624</span></div><div class="si sel" style="top:176.5px"><svg class="a" style="left:16px;top:8px" width="11.500" height="11" viewBox="0 0 23 22"><path d="M1 1h15v10h-4v10H1z" fill="#fff"/><path d="M4 5.500h9v2.200H4zM4 10h6v2.200H4zM4 14.500h5v2.200H4z" fill="#409eff"/><circle cx="17.500" cy="16.500" r="3.600" fill="#409eff" stroke="#fff" stroke-width="2.200"/></svg><span class="l" style="left:36.5px">待发布</span><span class="n">43</span></div><div class="si" style="top:203.5px"><svg class="a" style="left:15px;top:7.500px" width="13.500" height="12" viewBox="0 0 24 22"><path d="M23 1L1 10l6 2.500L19 4 9.500 14v7l3.500-4.500 4 2z" fill="#222"/></svg><span class="l" style="left:36.5px">发布中</span></div><svg class="a" style="left:14.500px;top:241.500px" width="6" height="4" viewBox="0 0 6 4"><path d="M0 0h6L3 4z" fill="#222"/></svg><div class="si" style="top:338.5px"><span class="l" style="left:33px">停止销售-待处理</span></div><div class="si" style="top:365.5px"><span class="l" style="left:33px">已下架</span><span class="n">1221</span></div><div class="si" style="top:392.5px"><span class="l" style="left:33px">暂停销售</span></div><div class="si" style="top:419.5px"><span class="l" style="left:33px">冻结</span></div><div class="si" style="top:446.5px"><span class="l" style="left:33px">已删除</span><span class="n">544</span></div><div class="si" style="top:473.5px"><svg class="a" style="left:15.500px;top:7.500px" width="12" height="12" viewBox="0 0 24 24"><circle cx="12" cy="12" r="10.500" fill="none" stroke="#222" stroke-width="1.800"/><rect x="11" y="6" width="2" height="8" fill="#222"/><rect x="11" y="16" width="2" height="2.200" fill="#222"/></svg><span class="l" style="left:36.5px">发布失败</span><span class="n">3</span></div><div class="si" style="top:500.5px"><svg class="a" style="left:16px;top:7.500px" width="11" height="12" viewBox="0 0 22 24"><path d="M1 5h20M7.500 5V2h7v3M3.500 5l1 17h13l1-17M8.500 9.500v8M13.500 9.500v8" fill="none" stroke="#222" stroke-width="1.900"/></svg><span class="l" style="left:36.5px">回收站</span></div><div class="sh" style="top:528px;height:41px"><div class="t" style="left:13.500px;top:15.35px">公共分组</div></div><svg class="a" style="left:150.5px;top:542.75px" width="10.500" height="10.500" viewBox="0 0 21 21"><rect x="1" y="1" width="19" height="19" rx="3" fill="none" stroke="#333" stroke-width="1.800"/><path d="M5 7h5m4 0h2M5 14h2m4 0h5" stroke="#333" stroke-width="1.800"/><circle cx="12" cy="7" r="2" fill="none" stroke="#333" stroke-width="1.500"/><circle cx="9" cy="14" r="2" fill="none" stroke="#333" stroke-width="1.500"/></svg><svg class="a" style="left:165.5px;top:542.25px" width="12" height="12" viewBox="1 1 22 22"><path d="M12 8a4 4 0 1 0 0 8 4 4 0 0 0 0-8zm9.400 5.900l2 1.500-2.200 3.900-2.400-1a8 8 0 0 1-2.300 1.300L16.200 22h-4.400l-.4-2.400a8 8 0 0 1-2.300-1.300l-2.400 1-2.200-3.900 2-1.500a8 8 0 0 1 0-2.700l-2-1.500 2.200-3.900 2.400 1a8 8 0 0 1 2.300-1.300L11.800 2h4.400l.3 2.400a8 8 0 0 1 2.300 1.300l2.400-1 2.200 3.900-2 1.500a8 8 0 0 1 0 2.700z" transform="translate(-2 0)" fill="#222" fill-rule="evenodd"/></svg><div class="si sel" style="top:568.5px"><span class="l" style="left:15.5px">不限</span><span class="n">2624</span></div><div class="si" style="top:595.5px"><span class="l" style="left:15.5px">未分组</span><span class="n">2624</span></div><div class="si" style="top:622.5px"><span class="l" style="left:15.5px;font-weight:bold">袜子</span><svg class="a" style="left:5.500px;top:9.500px" width="4" height="8" viewBox="0 0 4 8"><path d="M0 0l4 4-4 4z" fill="#222"/></svg></div><div class="si" style="top:649.5px"><span class="l" style="left:15.5px">1店的分组</span></div><div class="si" style="top:676.5px"><span class="l" style="left:15.5px;font-weight:bold">服装</span><svg class="a" style="left:5.500px;top:9.500px" width="4" height="8" viewBox="0 0 4 8"><path d="M0 0l4 4-4 4z" fill="#222"/></svg></div><div class="si" style="top:703.5px"><span class="l" style="left:15.5px;font-weight:bold">11</span><svg class="a" style="left:5.500px;top:9.500px" width="4" height="8" viewBox="0 0 4 8"><path d="M0 0l4 4-4 4z" fill="#222"/></svg></div><div class="si" style="top:730.5px"><span class="l" style="left:15.5px">连衣裙</span></div><div class="sh" style="top:758px;height:41px"><div class="t" style="left:13.500px;top:15.35px">专属分组</div></div><svg class="a" style="left:150.5px;top:772.75px" width="10.500" height="10.500" viewBox="0 0 21 21"><rect x="1" y="1" width="19" height="19" rx="3" fill="none" stroke="#333" stroke-width="1.800"/><path d="M5 7h5m4 0h2M5 14h2m4 0h5" stroke="#333" stroke-width="1.800"/><circle cx="12" cy="7" r="2" fill="none" stroke="#333" stroke-width="1.500"/><circle cx="9" cy="14" r="2" fill="none" stroke="#333" stroke-width="1.500"/></svg><svg class="a" style="left:165.5px;top:772.25px" width="12" height="12" viewBox="1 1 22 22"><path d="M12 8a4 4 0 1 0 0 8 4 4 0 0 0 0-8zm9.400 5.900l2 1.500-2.200 3.900-2.400-1a8 8 0 0 1-2.300 1.300L16.200 22h-4.400l-.4-2.400a8 8 0 0 1-2.300-1.300l-2.400 1-2.200-3.900 2-1.500a8 8 0 0 1 0-2.700l-2-1.500 2.200-3.900 2.400 1a8 8 0 0 1 2.300-1.300L11.800 2h4.400l.3 2.400a8 8 0 0 1 2.300 1.300l2.400-1 2.200 3.900-2 1.500a8 8 0 0 1 0 2.700z" transform="translate(-2 0)" fill="#222" fill-rule="evenodd"/></svg><div class="si sel" style="top:798.5px"><span class="l" style="left:15.5px">不限</span><span class="n">2624</span></div><div class="si" style="top:825.5px"><span class="l" style="left:15.5px">未分组</span><span class="n">2624</span></div><div class="si" style="top:852.5px"><span class="l" style="left:15.5px;font-weight:bold">123123123123123123…</span><svg class="a" style="left:5.500px;top:9.500px" width="4" height="8" viewBox="0 0 4 8"><path d="M0 0l4 4-4 4z" fill="#222"/></svg></div><div class="si" style="top:879.5px"><span class="l" style="left:15.5px">这是二店的专属</span></div><div class="a" style="left:10px;top:225px;width:180px;height:125px;overflow:hidden"><div class="a" style="left:8.500px;top:7.500px;width:190px;height:107.500px;background:#fff;box-shadow:0 1px 6px rgba(0,0,0,.18);border-radius:2px"></div>
<div class="t" style="left:18px;top:18.500px;font-size:11.700px;color:#555">已选中</div>
<svg class="a" style="left:172.500px;top:19.500px" width="9" height="10" viewBox="0 0 9 10"><path d="M.7.700 4.500 5 .7 9.300M4.700.700 8.500 5 4.700 9.300" fill="none" stroke="#666" stroke-width="1"/></svg>
<div class="t" style="left:18px;top:42.500px;font-size:11.700px;color:#555">数量</div>
<div class="t" style="left:174.500px;top:42.500px;font-size:11.700px;color:#555">2</div>
<div class="t" style="left:18px;top:66.500px;font-size:11.700px;color:#409eff">清空选中</div>
<div class="cb on" style="left:18px;top:89.500px"><svg class="a" style="left:1.500px;top:2px" width="9" height="7" viewBox="0 0 18 14"><path d="M2 7l5 5L16 2" fill="none" stroke="#fff" stroke-width="2.600"/></svg></div>
<div class="t" style="left:40px;top:89.500px;font-size:12.600px;color:#409eff">保留跨页勾选</div></div><div class="red" style="left:193px;top:227.400px;width:51.400px;height:235.800px"></div><svg class="a" style="left:0;top:0" width="1912" height="948" viewBox="0 0 1912 948"><path d="M208 497.500L295 846.300 302 840.600 294.800 868.600 276.200 846.200 284.600 848.500Z" fill="#fc1204"/><circle cx="392.200" cy="857.100" r="20.800" fill="#fc1204"/><text x="392.200" y="866" text-anchor="middle" font-family="Liberation Sans, sans-serif" font-size="25" fill="#fff">2</text></svg><div class="red" style="left:298px;top:893.200px;width:78px;height:55.300px"></div><div class="a" style="left:1905px;top:0;width:7px;height:948px;background:#f1f1f1"></div><div class="a" style="left:1905px;top:2px;width:7.600px;height:295.700px;border-radius:3.800px;background:#a8a8a8"></div></body></html>
